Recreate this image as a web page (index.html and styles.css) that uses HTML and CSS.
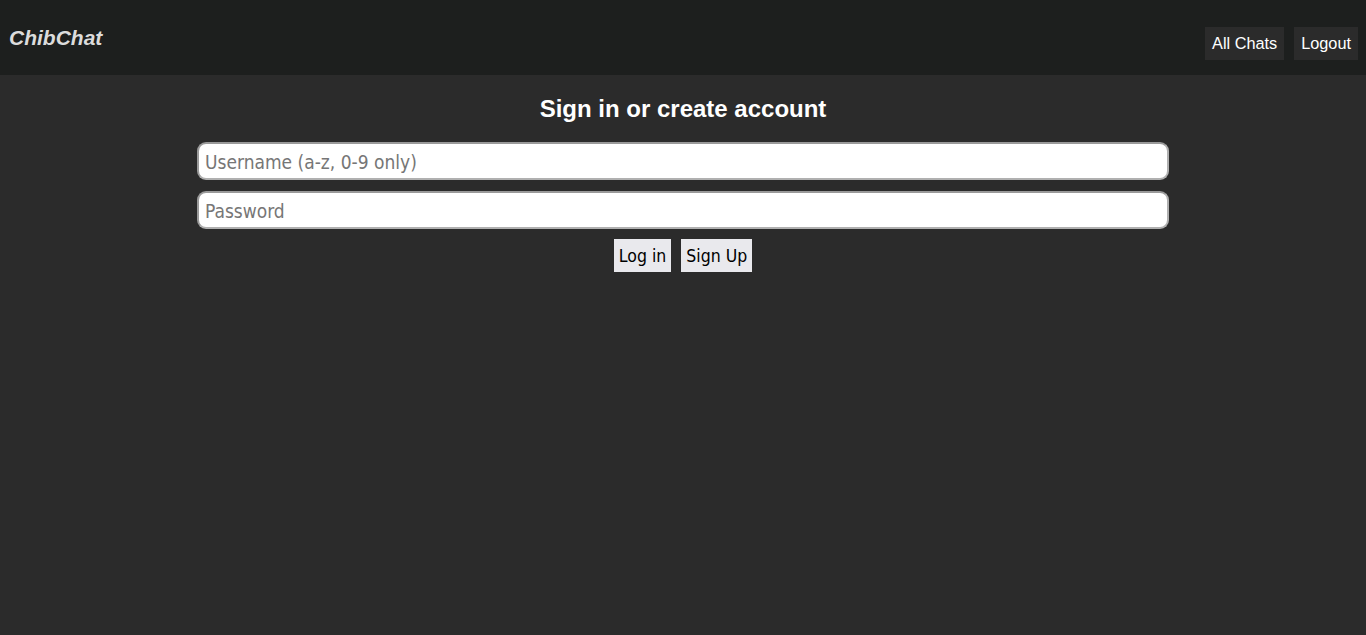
FILE: index.html
```html
<!DOCTYPE html>
<html>
<head>
<meta charset="utf-8">
<link rel="stylesheet" href="styles.css">
</head>
<body>
<header class="topbar">
  <div class="brand">ChibChat</div>
  <nav class="nav">
    <button class="nav-btn">All Chats</button>
    <button class="nav-btn">Logout</button>
  </nav>
</header>
<main class="auth">
  <h1 class="auth-title">Sign in or create account</h1>
  <input class="field" type="text" placeholder="Username (a-z, 0-9 only)">
  <input class="field field-last" type="password" placeholder="Password">
  <div class="actions">
    <button class="act-btn">Log in</button>
    <button class="act-btn">Sign Up</button>
  </div>
</main>
</body>
</html>
```
FILE: styles.css
```css
html, body {
  margin: 0;
  padding: 0;
  height: 100%;
}
body {
  background: #2b2b2b;
  font-family: "Liberation Sans", Arial, sans-serif;
}
.topbar {
  height: 75px;
  background: #1d1f1e;
  display: flex;
  justify-content: space-between;
  align-items: flex-start;
  box-sizing: border-box;
  padding: 0 8px 0 9px;
}
.brand {
  color: #dcdcdc;
  font-weight: bold;
  font-style: italic;
  font-size: 21px;
  margin-top: 26px;
}
.nav {
  display: flex;
  gap: 10px;
  margin-top: 27px;
}
.nav-btn {
  background: #2b2b2b;
  color: #ffffff;
  border: none;
  font-family: "Liberation Sans", Arial, sans-serif;
  font-size: 16.3px;
  height: 33px;
  padding: 0 7px;
}
.auth {
  display: flex;
  flex-direction: column;
  align-items: center;
}
.auth-title {
  color: #ffffff;
  font-size: 24px;
  font-weight: bold;
  margin: 20px 0 19px;
}
.field {
  width: 972px;
  height: 38px;
  box-sizing: border-box;
  border-radius: 9px;
  border: 2px solid #b0b0b0;
  border-top-color: #9a9a9a;
  border-left-color: #9a9a9a;
  background: #ffffff;
  font-family: "DejaVu Sans Condensed", "DejaVu Sans", Verdana, sans-serif;
  font-stretch: condensed;
  font-size: 19px;
  padding: 2px 6px 0;
  margin: 0 0 11px;
}
.field-last {
  margin-bottom: 10px;
}
.field::placeholder {
  color: #767676;
}
.actions {
  display: flex;
  gap: 10px;
}
.act-btn {
  background: #e9e9ed;
  border: none;
  color: #000;
  font-family: "DejaVu Sans Condensed", "DejaVu Sans", Verdana, sans-serif;
  font-stretch: condensed;
  font-size: 17.5px;
  height: 33px;
  padding: 0 5px;
}
```
